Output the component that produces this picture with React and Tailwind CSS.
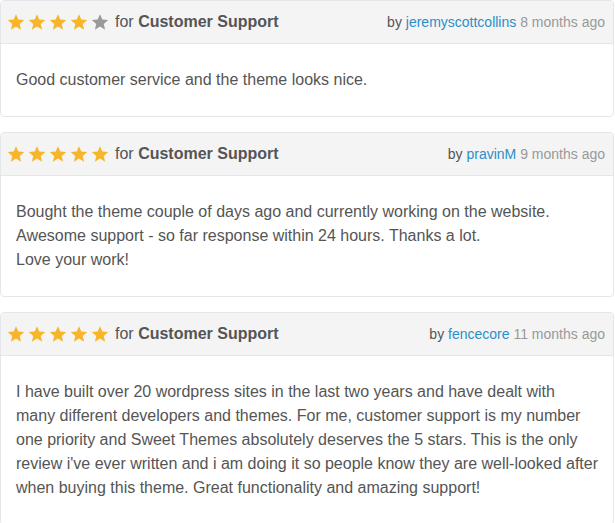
import React from "react";

const reviews = [
  {
    rating: 4,
    user: "jeremyscottcollins",
    when: "8 months ago",
    lines: ["Good customer service and the theme looks nice."],
  },
  {
    rating: 5,
    user: "pravinM",
    when: "9 months ago",
    lines: [
      "Bought the theme couple of days ago and currently working on the website.",
      "Awesome support - so far response within 24 hours. Thanks a lot.",
      "Love your work!",
    ],
  },
  {
    rating: 5,
    user: "fencecore",
    when: "11 months ago",
    lines: [
      "I have built over 20 wordpress sites in the last two years and have dealt with many different developers and themes. For me, customer support is my number one priority and Sweet Themes absolutely deserves the 5 stars. This is the only review i've ever written and i am doing it so people know they are well-looked after when buying this theme. Great functionality and amazing support!",
    ],
  },
];

const Star = ({ on }) => (
  <svg width="18" height="18" viewBox="0 0 24 24" className={on ? "text-[#f7b52c]" : "text-[#9a9a9a]"}>
    <path
      fill="currentColor"
      d="M12 1.5l3.1 7.2 7.9.6-6 5.2 1.8 7.7L12 18.1 5.2 22.2 7 14.5 1 9.3l7.9-.6z"
    />
  </svg>
);

const App = () => {
  return (
    <div className="w-[615px] bg-white font-['Liberation_Sans',Arial,sans-serif] text-[16px] text-[#555]">
      <div className="flex flex-col gap-[15px] pr-px">
        {reviews.map((r, i) => (
          <div key={i} className="rounded-[4px] border border-[#e3e6ea] bg-white">
            <div className="flex h-[43px] items-center justify-between rounded-t-[4px] border-b border-[#e3e6ea] bg-[#f4f4f4] pl-[6px] pr-[8px]">
              <div className="flex items-center">
                <div className="flex gap-[3px]">
                  {[0, 1, 2, 3, 4].map((s) => (
                    <Star key={s} on={s < r.rating} />
                  ))}
                </div>
                <span className="ml-[6px]">
                  for <b className="font-bold">Customer Support</b>
                </span>
              </div>
              <div className="text-[14px]">
                by <span className="text-[#2a8fc7]">{r.user}</span>{" "}
                <span className="text-[#999]">{r.when}</span>
              </div>
            </div>
            <div className="px-[15px] py-[24px] leading-[24px]">
              {r.lines.map((l, j) => (
                <p key={j}>{l}</p>
              ))}
            </div>
          </div>
        ))}
      </div>
    </div>
  );
};

export default App;
